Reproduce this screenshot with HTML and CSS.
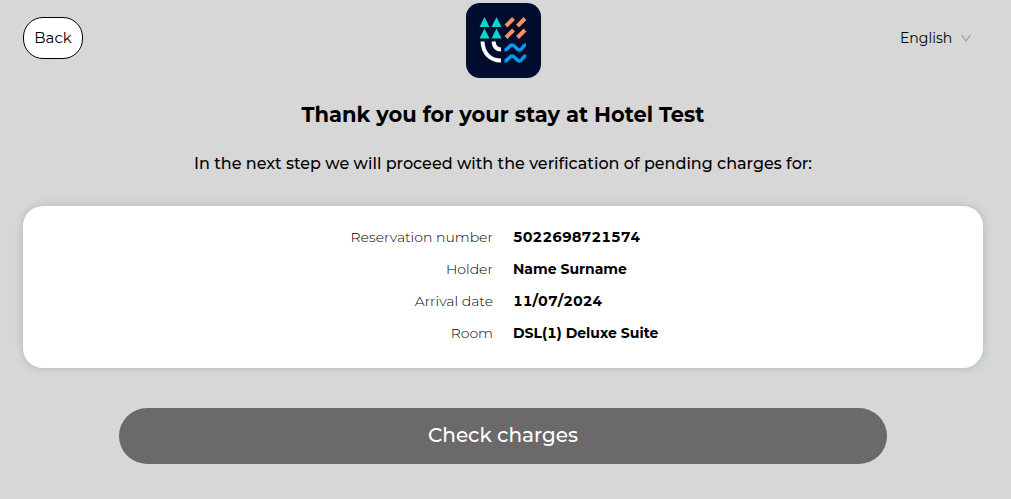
FILE: index.html
```html
<!DOCTYPE html>
<html lang="en">
<head>
    <meta charset="UTF-8">
    <meta name="viewport" content="width=device-width, initial-scale=1.0">
    <title>Hotel Test</title>
    <link rel="stylesheet" href="styles.css">
</head>
<body>
    <div class="container">
        <header class="header">
            <button type="button" class="btn-back">Back</button>
            <svg class="logo" viewBox="0 0 75 75" role="img" aria-label="Hotel Test">
                <rect width="75" height="75" rx="14" fill="#000d2e"/>
                <path fill="#0cd6cf" d="M18.500 14l5 10h-10zM30.500 14l5 10h-10zM18.500 25.500l5 10h-10zM30.500 25.500l5 10h-10z"/>
                <g fill="none" stroke="#fa925c" stroke-width="4">
                    <path d="M40 23l7.500-7.500M51.500 23l7.500-7.500M40 34.500l7.500-7.500M51.500 34.500l7.500-7.500"/>
                </g>
                <g fill="none" stroke="#fff" stroke-width="4">
                    <path d="M16.500 38.500C17 50 24 57.500 35 57.500M27.500 38.500C28 43.500 30.500 46.500 35 46.500"/>
                </g>
                <g fill="none" stroke="#0b98ea" stroke-width="3.600">
                    <path d="M38.500 47c4 0 4.500-5 7.500-5s4.500 5 7.500 5 3-5 6.500-5M38.500 58c4 0 4.500-5 7.500-5s4.500 5 7.500 5 3-5 6.500-5"/>
                </g>
            </svg>
            <div class="language">
                <select class="language-select" aria-label="Language">
                    <option>English</option>
                </select>
                <svg class="language-arrow" viewBox="0 0 10 8" aria-hidden="true">
                    <path d="M.5 1L5 7l4.500-6" fill="none" stroke="#a9a9a9" stroke-width="1.300"/>
                </svg>
            </div>
        </header>
        <main>
            <h1 class="title">Thank you for your stay at Hotel Test</h1>
            <p class="subtitle">In the next step we will proceed with the verification of pending charges for:</p>
            <dl class="card">
                <dt>Reservation number</dt>
                <dd>5022698721574</dd>
                <dt>Holder</dt>
                <dd>Name Surname</dd>
                <dt>Arrival date</dt>
                <dd>11/07/2024</dd>
                <dt>Room</dt>
                <dd>DSL(1) Deluxe Suite</dd>
            </dl>
            <button type="button" class="btn-check">Check charges</button>
        </main>
    </div>
</body>
</html>
```

FILE: styles.css
```css
* {
    box-sizing: border-box;
}
body {
    font-family: Montserrat, Inter, sans-serif;
    font-size: 14px;
    font-variant-numeric: tabular-nums;
    background-color: #d7d7d7;
    color: #000;
    margin: 0;
}
button, select {
    font-family: inherit;
    color: inherit;
    cursor: pointer;
}
.container {
    padding: 3px 28px 32px 23px;
}
.header {
    display: grid;
    grid-template-columns: 1fr auto 1fr;
    align-items: center;
}
.btn-back {
    justify-self: start;
    width: 60px;
    height: 42px;
    margin-bottom: 5px;
    padding: 0 0 2px;
    font-size: 15px;
    background-color: #fff;
    border: 1px solid #000;
    border-radius: 20px;
}
.logo {
    display: block;
    width: 75px;
    height: 75px;
}
.language {
    position: relative;
    justify-self: end;
    margin: 0 12px 5px 0;
}
.language-select {
    appearance: none;
    height: 32px;
    padding: 0 18px 0 0;
    font-size: 14px;
    background: none;
    border: none;
}
.language-arrow {
    position: absolute;
    top: 12px;
    right: 0;
    width: 10px;
    height: 8px;
    pointer-events: none;
}
.title {
    margin: 21px 0 0;
    font-size: 21px;
    font-weight: 700;
    line-height: 32px;
    text-align: center;
}
.subtitle {
    margin: 21px 0 0;
    font-size: 16px;
    font-weight: 500;
    line-height: 24px;
    text-align: center;
}
.card {
    display: grid;
    grid-template-columns: 1fr 1fr;
    column-gap: 20px;
    margin: 30px 0 40px;
    padding: 15px 0 19px;
    line-height: 32px;
    background-color: #fff;
    border-radius: 20px;
    box-shadow: 0 0 10px #a9b8c0;
}
.card dt {
    font-weight: 300;
    text-align: right;
}
.card dd {
    margin: 0;
    font-weight: 700;
}
.btn-check {
    display: block;
    width: 80%;
    height: 56px;
    margin: 0 auto;
    padding: 0 0 2px;
    font-size: 20px;
    font-weight: 500;
    color: #fff;
    background-color: #6b6969;
    border: none;
    border-radius: 28px;
}
```
